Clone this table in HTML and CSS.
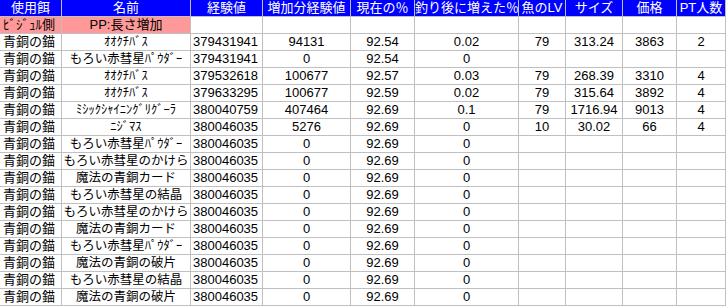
FILE: index.html
```html
<!DOCTYPE html>
<html lang="ja">
<head>
<meta charset="utf-8">
<link rel="stylesheet" href="styles.css">
</head>
<body>
<div class="sheet">
  <div class="c h">使用餌</div><div class="c h">名前</div><div class="c h">経験値</div><div class="c h">増加分経験値</div><div class="c h">現在の％</div><div class="c h">釣り後に増えた％</div><div class="c h">魚のLV</div><div class="c h">サイズ</div><div class="c h">価格</div><div class="c h">PT人数</div>

  <div class="c pink left">ﾋﾞｼﾞｭﾙ側</div><div class="c pink">PP:長さ増加</div><div class="c"></div><div class="c"></div><div class="c"></div><div class="c"></div><div class="c"></div><div class="c"></div><div class="c"></div><div class="c"></div>

  <div class="c left">青銅の錨</div><div class="c name">ｵｵｸﾁﾊﾞｽ</div><div class="c num">379431941</div><div class="c">94131</div><div class="c">92.54</div><div class="c">0.02</div><div class="c">79</div><div class="c">313.24</div><div class="c">3863</div><div class="c">2</div>

  <div class="c left">青銅の錨</div><div class="c name">もろい赤彗星ﾊﾟｳﾀﾞｰ</div><div class="c num">379431941</div><div class="c">0</div><div class="c">92.54</div><div class="c">0</div><div class="c"></div><div class="c"></div><div class="c"></div><div class="c"></div>

  <div class="c left">青銅の錨</div><div class="c name">ｵｵｸﾁﾊﾞｽ</div><div class="c num">379532618</div><div class="c">100677</div><div class="c">92.57</div><div class="c">0.03</div><div class="c">79</div><div class="c">268.39</div><div class="c">3310</div><div class="c">4</div>

  <div class="c left">青銅の錨</div><div class="c name">ｵｵｸﾁﾊﾞｽ</div><div class="c num">379633295</div><div class="c">100677</div><div class="c">92.59</div><div class="c">0.02</div><div class="c">79</div><div class="c">315.64</div><div class="c">3892</div><div class="c">4</div>

  <div class="c left">青銅の錨</div><div class="c name">ﾐｼｯｸｼｬｲﾆﾝｸﾞﾘｸﾞｰﾗ</div><div class="c num">380040759</div><div class="c">407464</div><div class="c">92.69</div><div class="c">0.1</div><div class="c">79</div><div class="c">1716.94</div><div class="c">9013</div><div class="c">4</div>

  <div class="c left">青銅の錨</div><div class="c name">ﾆｼﾞﾏｽ</div><div class="c num">380046035</div><div class="c">5276</div><div class="c">92.69</div><div class="c">0</div><div class="c">10</div><div class="c">30.02</div><div class="c">66</div><div class="c">4</div>

  <div class="c left">青銅の錨</div><div class="c name">もろい赤彗星ﾊﾟｳﾀﾞｰ</div><div class="c num">380046035</div><div class="c">0</div><div class="c">92.69</div><div class="c">0</div><div class="c"></div><div class="c"></div><div class="c"></div><div class="c"></div>

  <div class="c left">青銅の錨</div><div class="c name">もろい赤彗星のかけら</div><div class="c num">380046035</div><div class="c">0</div><div class="c">92.69</div><div class="c">0</div><div class="c"></div><div class="c"></div><div class="c"></div><div class="c"></div>

  <div class="c left">青銅の錨</div><div class="c name">魔法の青銅カード</div><div class="c num">380046035</div><div class="c">0</div><div class="c">92.69</div><div class="c">0</div><div class="c"></div><div class="c"></div><div class="c"></div><div class="c"></div>

  <div class="c left">青銅の錨</div><div class="c name">もろい赤彗星の結晶</div><div class="c num">380046035</div><div class="c">0</div><div class="c">92.69</div><div class="c">0</div><div class="c"></div><div class="c"></div><div class="c"></div><div class="c"></div>

  <div class="c left">青銅の錨</div><div class="c name">もろい赤彗星のかけら</div><div class="c num">380046035</div><div class="c">0</div><div class="c">92.69</div><div class="c">0</div><div class="c"></div><div class="c"></div><div class="c"></div><div class="c"></div>

  <div class="c left">青銅の錨</div><div class="c name">魔法の青銅カード</div><div class="c num">380046035</div><div class="c">0</div><div class="c">92.69</div><div class="c">0</div><div class="c"></div><div class="c"></div><div class="c"></div><div class="c"></div>

  <div class="c left">青銅の錨</div><div class="c name">もろい赤彗星ﾊﾟｳﾀﾞｰ</div><div class="c num">380046035</div><div class="c">0</div><div class="c">92.69</div><div class="c">0</div><div class="c"></div><div class="c"></div><div class="c"></div><div class="c"></div>

  <div class="c left">青銅の錨</div><div class="c name">魔法の青銅の破片</div><div class="c num">380046035</div><div class="c">0</div><div class="c">92.69</div><div class="c">0</div><div class="c"></div><div class="c"></div><div class="c"></div><div class="c"></div>

  <div class="c left">青銅の錨</div><div class="c name">もろい赤彗星の結晶</div><div class="c num">380046035</div><div class="c">0</div><div class="c">92.69</div><div class="c">0</div><div class="c"></div><div class="c"></div><div class="c"></div><div class="c"></div>

  <div class="c left">青銅の錨</div><div class="c name">魔法の青銅の破片</div><div class="c num">380046035</div><div class="c">0</div><div class="c">92.69</div><div class="c">0</div><div class="c"></div><div class="c"></div><div class="c"></div><div class="c"></div>
</div>
</body>
</html>
```
FILE: styles.css
```css
html, body {
  margin: 0;
  padding: 0;
  background: #ffffff;
}

.sheet {
  display: grid;
  grid-template-columns: 61px 128px 71px 87px 63px 103px 46px 56px 53px 48px;
  grid-auto-rows: 16px;
  gap: 1px;
  padding: 0 1px 1px 0;
  width: max-content;
  background: #c0c0c0;
  font-family: "Liberation Sans", "Noto Sans CJK JP", sans-serif;
  font-size: 13px;
  color: #000000;
}

.c {
  background: #ffffff;
  line-height: 16px;
  height: 16px;
  text-align: center;
  white-space: nowrap;
  overflow: hidden;
}

.h {
  background: #0000ff;
  color: #ffffff;
}

.pink {
  background: #ff9999;
}

.left {
  text-align: left;
  padding-left: 3px;
}

.name {
  font-size: 12.5px;
}

.num {
  text-align: left;
  padding-left: 2px;
}
```
